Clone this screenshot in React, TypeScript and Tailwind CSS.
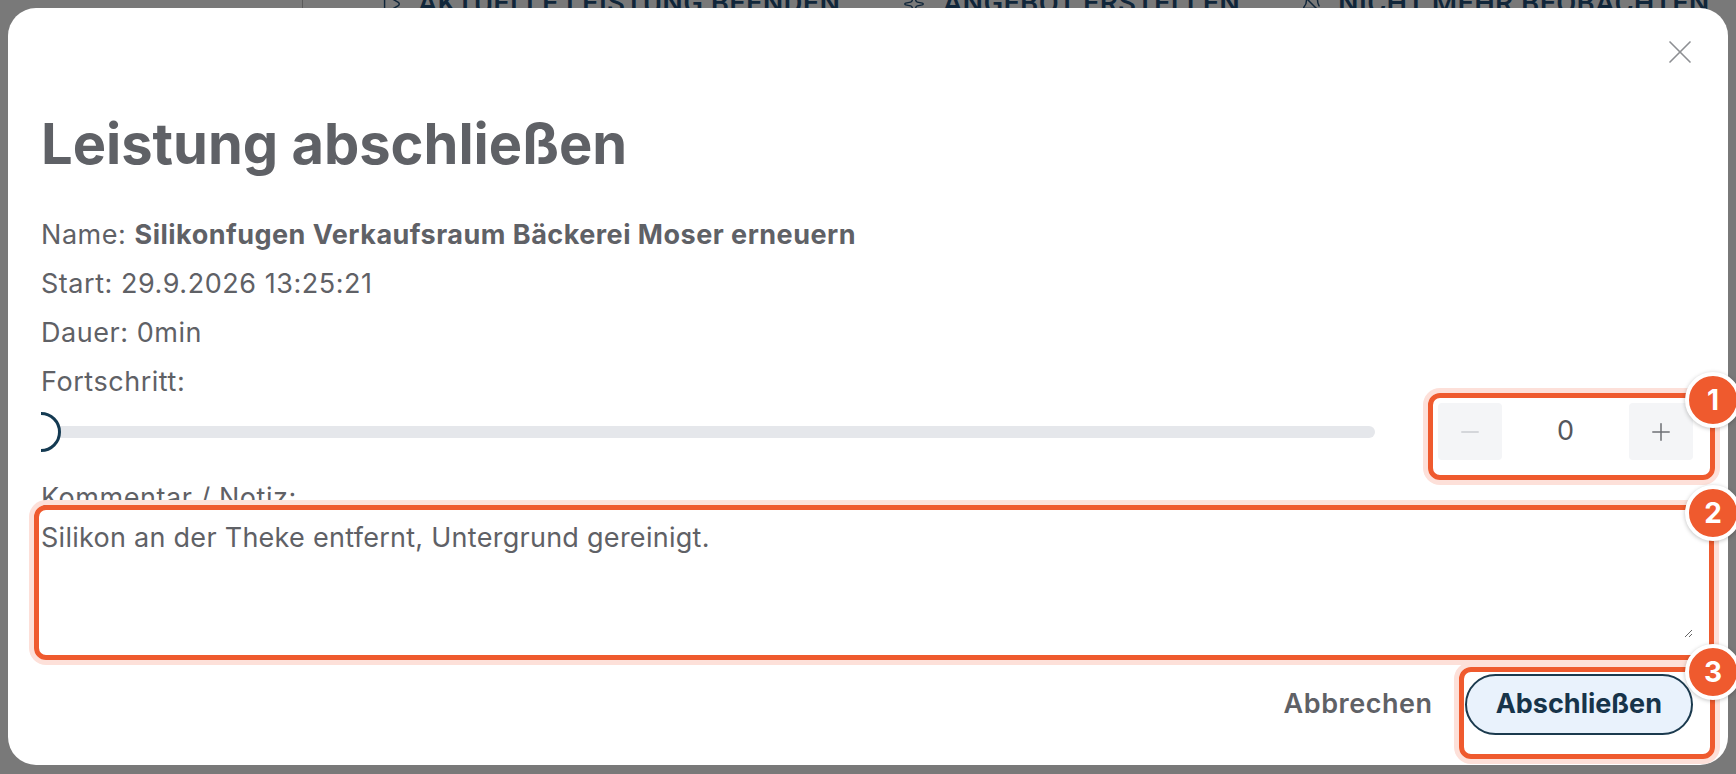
import { Play, Sparkles, BellOff, X, Minus, Plus } from 'lucide-react';

// Hintergrundseite (abgedunkelt), nur die obere Aktionsleiste schaut heraus
function TopBar() {
  return (
    <div className="-mt-[14px] flex h-[36px] items-center whitespace-nowrap pl-[302px] font-['Roboto',sans-serif] text-[29px] font-medium uppercase text-[#10263a]">
      <div className="h-full w-px bg-[#5a5a5a]" />
      <div className="ml-[77px] flex items-center gap-[16px]">
        <Play size={22} strokeWidth={1.6} />
        <span className="w-[425px] tracking-[0.01em]">Aktuelle Leistung beenden</span>
      </div>
      <div className="ml-[60px] flex items-center gap-[18px]">
        <Sparkles size={22} strokeWidth={1.6} />
        <span className="w-[296px] tracking-[0.01em]">Angebot erstellen</span>
      </div>
      <div className="ml-[62px] flex items-center gap-[15px]">
        <BellOff size={22} strokeWidth={1.6} />
        <span className="tracking-[0.01em]">Nicht mehr beobachten</span>
      </div>
    </div>
  );
}

function Stepper({ value }: { value: number }) {
  return (
    <div className="flex h-[57px] w-[255px] items-stretch">
      <button className="flex w-[64px] items-center justify-center rounded-[4px] bg-[#f4f5f7] text-[#c9ccd1]">
        <Minus size={28} strokeWidth={1.3} />
      </button>
      <div className="flex flex-1 items-center justify-center text-[27px] text-[#55575b]">{value}</div>
      <button className="flex w-[64px] items-center justify-center rounded-[4px] bg-[#f4f5f7] text-[#6d7075]">
        <Plus size={28} strokeWidth={1.3} />
      </button>
    </div>
  );
}

function Highlight({ n, box, badge }: { n: number; box: string; badge: string }) {
  return (
    <>
      <div className={`pointer-events-none absolute rounded-[12px] border-[5px] border-[#ef5a2e] shadow-[0_0_0_5px_#fde0d9] ${box}`} />
      <div
        className={`absolute flex h-[56px] w-[56px] items-center justify-center rounded-full border-[4px] border-white bg-[#ef5a2e] text-[28px] font-bold text-white shadow-[0_1px_4px_rgba(0,0,0,0.25)] ${badge}`}
      >
        {n}
      </div>
    </>
  );
}

export default function App() {
  return (
    <div className="relative flex h-[774px] w-[1736px] flex-col overflow-hidden bg-[#797979] font-['Inter',sans-serif]">
      <TopBar />

      {/* Dialog */}
      <div className="absolute left-[8px] top-[8px] flex h-[757px] w-[1720px] flex-col rounded-[28px] bg-white pb-[30px] pl-[33px] pr-[35px] pt-[108px] text-[#5f6166]">
        <button className="absolute right-[28px] top-[24px] flex h-[40px] w-[40px] items-center justify-center text-[#8d8f93]">
          <X size={40} strokeWidth={1} />
        </button>

        <h2 className="text-[56px] font-bold leading-[56px]">Leistung abschließen</h2>

        <div className="mt-[38px] text-[27px] tracking-[0.02em]">
          <p className="leading-[49px]">
            Name: <span className="font-bold tracking-[0.018em]">Silikonfugen Verkaufsraum Bäckerei Moser erneuern</span>
          </p>
          <p className="leading-[49px]">Start: 29.9.2026 13:25:21</p>
          <p className="leading-[49px]">Dauer: 0min</p>
          <p className="leading-[50px]">Fortschritt:</p>
        </div>

        <div className="-mt-[4px] flex h-[57px] items-center">
          <div className="relative flex h-full flex-1 items-center overflow-hidden">
            <div className="h-[12px] w-full rounded-full bg-[#e5e7eb]" />
            <div className="absolute left-[-20px] top-1/2 h-[40px] w-[40px] -translate-y-1/2 rounded-full border-[3px] border-[#143a52] bg-white" />
          </div>
          <div className="ml-[63px]">
            <Stepper value={0} />
          </div>
        </div>

        <label className="mt-[20px] block text-[27px] leading-[36px] tracking-[0.02em]">Kommentar / Notiz:</label>
        <textarea
          className="h-[122px] w-full border-0 bg-transparent p-0 pt-[4px] text-[27px] leading-[36px] tracking-[0.01em] text-[#5f6166] outline-none"
          defaultValue="Silikon an der Theke entfernt, Untergrund gereinigt."
        />

        <div className="mt-auto flex items-center justify-end gap-[32px]">
          <button className="text-[27px] font-semibold tracking-[0.02em] text-[#5f6166]">Abbrechen</button>
          <button className="h-[61px] rounded-full border-2 border-[#1b3a4e] bg-[#e9f2fc] px-[29px] text-[27px] font-bold text-[#17344a]">
            Abschließen
          </button>
        </div>
      </div>

      {/* Markierungen */}
      <Highlight n={1} box="left-[1428px] top-[393px] h-[87px] w-[287px]" badge="left-[1685px] top-[372px]" />
      <Highlight n={2} box="left-[34px] top-[505px] h-[155px] w-[1680px]" badge="left-[1685px] top-[485px]" />
      <Highlight n={3} box="left-[1459px] top-[667px] h-[92px] w-[256px]" badge="left-[1685px] top-[644px]" />
    </div>
  );
}
